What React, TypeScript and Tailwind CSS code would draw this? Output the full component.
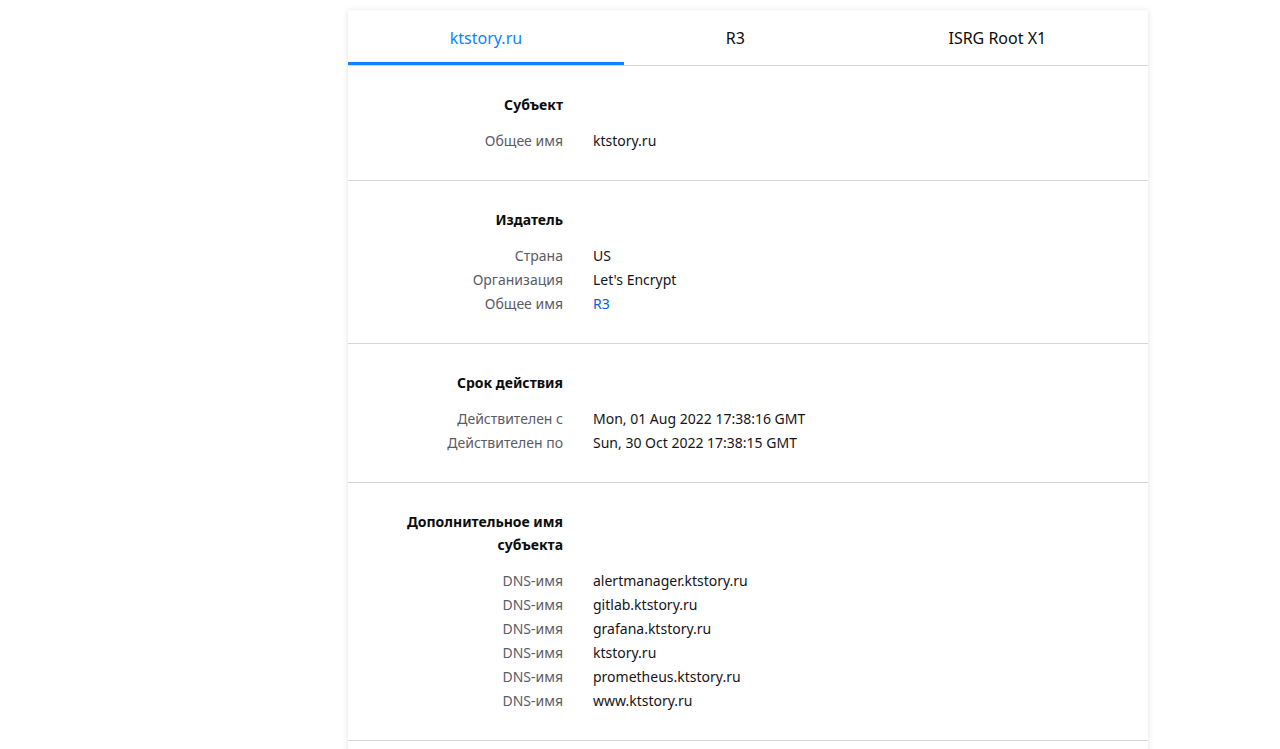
import React, { useState } from "react";

type Row = { label: string; value: string; link?: boolean };
type Section = { title: string; rows: Row[] };

const tabs = ["ktstory.ru", "R3", "ISRG Root X1"];

const sections: Section[] = [
  { title: "Субъект", rows: [{ label: "Общее имя", value: "ktstory.ru" }] },
  {
    title: "Издатель",
    rows: [
      { label: "Страна", value: "US" },
      { label: "Организация", value: "Let's Encrypt" },
      { label: "Общее имя", value: "R3", link: true },
    ],
  },
  {
    title: "Срок действия",
    rows: [
      { label: "Действителен с", value: "Mon, 01 Aug 2022 17:38:16 GMT" },
      { label: "Действителен по", value: "Sun, 30 Oct 2022 17:38:15 GMT" },
    ],
  },
  {
    title: "Дополнительное имя субъекта",
    rows: [
      { label: "DNS-имя", value: "alertmanager.ktstory.ru" },
      { label: "DNS-имя", value: "gitlab.ktstory.ru" },
      { label: "DNS-имя", value: "grafana.ktstory.ru" },
      { label: "DNS-имя", value: "ktstory.ru" },
      { label: "DNS-имя", value: "prometheus.ktstory.ru" },
      { label: "DNS-имя", value: "www.ktstory.ru" },
    ],
  },
  {
    title: "Информация об открытом ключе",
    rows: [
      { label: "Алгоритм", value: "RSA" },
      { label: "Размер ключа", value: "2048" },
      { label: "Экспонента", value: "65537" },
    ],
  },
];

export default function App() {
  const [active, setActive] = useState(0);

  return (
    <div className="min-h-screen bg-white font-['Noto_Sans',sans-serif] text-[14px] text-[#15141a]">
      <div className="ml-[348px] mt-[10px] w-[800px] bg-white shadow-[0_1px_6px_rgba(0,0,0,0.12)]">
        <div className="flex border-b border-[#d7d7db]">
          {tabs.map((t, i) => (
            <button
              key={t}
              onClick={() => setActive(i)}
              className={
                "flex-auto h-[55px] px-4 text-[16px] " +
                (i === active
                  ? "text-[#0a84ff] border-b-[3px] border-[#0a84ff] pt-[3px]"
                  : "text-[#0c0c0d]")
              }
            >
              {t}
            </button>
          ))}
        </div>

        {sections.map((s) => (
          <div key={s.title} className="border-b border-[#d7d7db] pt-[27px] pb-[27px]">
            <div className="grid grid-cols-[215px_1fr] gap-x-[30px]">
              <div className="pl-[34px] text-right font-bold leading-[23px] text-[#0c0c0d]">
                {s.title}
              </div>
              <div />
            </div>
            <div className="mt-[13px] grid grid-cols-[215px_1fr] gap-x-[30px] leading-[24px]">
              {s.rows.map((r, i) => (
                <React.Fragment key={i}>
                  <div className="text-right text-[#5b5b66]">{r.label}</div>
                  <div className={r.link ? "text-[#0061e0]" : "text-[#15141a]"}>
                    {r.value}
                  </div>
                </React.Fragment>
              ))}
            </div>
          </div>
        ))}
      </div>
    </div>
  );
}
